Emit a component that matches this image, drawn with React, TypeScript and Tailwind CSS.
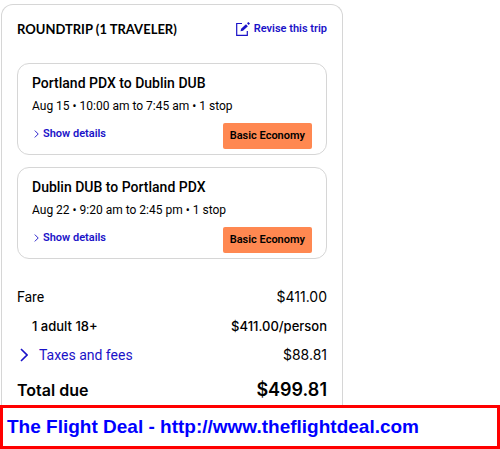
const flights = [
  { route: "Portland PDX to Dublin DUB", times: "Aug 15 • 10:00 am to 7:45 am • 1 stop" },
  { route: "Dublin DUB to Portland PDX", times: "Aug 22 • 9:20 am to 2:45 pm • 1 stop" },
]

const Chevron = ({ className }: { className: string }) => (
  <svg viewBox="0 0 8 14" fill="none" stroke="currentColor" className={className} aria-hidden="true">
    <path d="M1 1l6 6-6 6" strokeWidth="1.6" />
  </svg>
)

const EditIcon = () => (
  <svg viewBox="0 0 14 14" fill="none" className="w-3.5 h-3.5" aria-hidden="true">
    <path d="M6 1.5H0.7V13.3H11.3V9" stroke="currentColor" strokeWidth="1.2" />
    <path d="M4.5 9.3l.6-2.5L10 2.3l1.9 1.9L7 8.7z" fill="currentColor" />
    <path d="M11 1.3L12.4 0 14 1.6l-1.4 1.5z" fill="currentColor" />
  </svg>
)

const FlightCard = ({ route, times }: { route: string; times: string }) => (
  <section className="rounded-xl border border-[#d6d6d6] pt-[7px] pb-[5px] px-3.5">
    <h3 className="text-sm leading-6 font-medium">{route}</h3>
    <p className="text-xs leading-[22px]">{times}</p>
    <div className="flex items-start justify-between mt-1.5">
      <button className="flex items-center gap-1 pl-0.5 text-[11px] leading-[22px] font-semibold text-[#1a12c8]">
        <Chevron className="w-[5px] h-2" />
        Show details
      </button>
      <span className="rounded-xs bg-[#ff8851] px-[7px] text-[11px] leading-[26px] font-semibold">Basic Economy</span>
    </div>
  </section>
)

const App = () => {
  return (
    <main className="min-h-screen bg-white pt-1 font-['Roboto',sans-serif] text-black">
      <div className="ml-px max-w-[342px] rounded-t-xl border border-b-0 border-[#d6d6d6] px-[15px] pt-[13px]">
        {/* Header */}
        <header className="flex items-center justify-between mb-[23px]">
          <h2 className="font-['Lato',sans-serif] text-[13px] leading-5 font-bold">ROUNDTRIP (1 TRAVELER)</h2>
          <a href="#" className="flex items-center gap-1 text-[11px] leading-[22px] font-semibold text-[#1a12c8]">
            <EditIcon />
            Revise this trip
          </a>
        </header>

        <div className="flex flex-col gap-3">
          {flights.map((flight) => (
            <FlightCard key={flight.route} {...flight} />
          ))}
        </div>

        {/* Price breakdown */}
        <div className="flex flex-col gap-px mt-6 pb-px leading-7">
          <div className="flex justify-between">
            <span className="text-sm leading-7">Fare</span>
            <span className="font-['Inter',sans-serif] text-sm leading-7">$411.00</span>
          </div>
          <div className="flex justify-between pl-[15px] font-['Inter',sans-serif] text-[13px] leading-7 font-medium">
            <span>1 adult 18+</span>
            <span>$411.00/person</span>
          </div>
          <div className="flex justify-between text-sm leading-7">
            <button className="flex items-center gap-[11px] pl-[3px] text-[#1a12c8]">
              <Chevron className="w-2 h-3.5" />
              Taxes and fees
            </button>
            <span className="font-['Inter',sans-serif]">$88.81</span>
          </div>
          <div className="flex justify-between mt-1.5 font-['Inter',sans-serif] font-semibold">
            <span className="text-base leading-7">Total due</span>
            <span className="text-lg leading-7">$499.81</span>
          </div>
        </div>
      </div>

      {/* Site banner */}
      <footer className="border-3 border-[#ff0000] bg-white px-1 font-['Liberation_Sans',Arial,sans-serif] text-[19px] leading-[38px] font-bold text-[#0000ff]">
        The Flight Deal - http://www.theflightdeal.com
      </footer>
    </main>
  )
}

export default App
